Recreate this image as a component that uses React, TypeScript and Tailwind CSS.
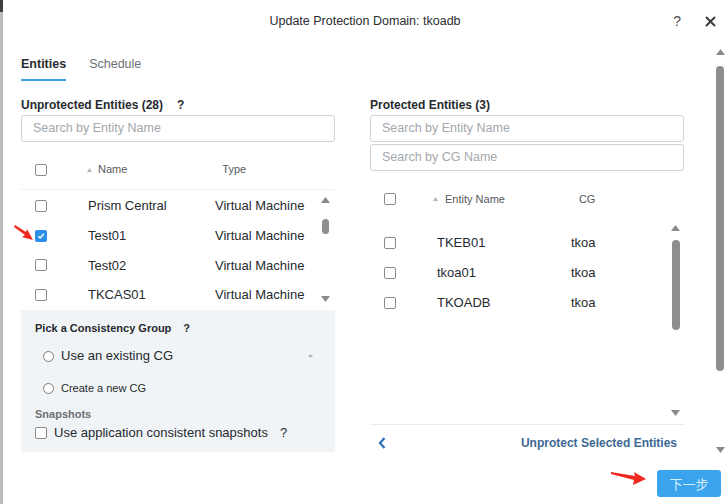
import React from 'react';

const Box: React.FC<{ checked?: boolean }> = ({ checked }) =>
    checked ? (
        <span className="flex h-[12px] w-[12px] items-center justify-center rounded-[2px] bg-[#2b8fe8]">
            <svg width="8" height="8" viewBox="0 0 8 8">
                <path d="M1.3 4.2 L3.2 6 L6.8 1.8" fill="none" stroke="#fff" strokeWidth="1.4" />
            </svg>
        </span>
    ) : (
        <span className="block h-[12px] w-[12px] rounded-[2px] border border-[#8b8b8b] bg-white" />
    );

const Radio: React.FC = () => <span className="block h-[11px] w-[11px] rounded-full border border-[#7d7d7d] bg-white" />;

const Up: React.FC = () => (
    <svg width="9" height="6" viewBox="0 0 9 6">
        <path d="M0 6 L4.5 0 L9 6 Z" fill="#8a8a8a" />
    </svg>
);

const Down: React.FC = () => (
    <svg width="9" height="6" viewBox="0 0 9 6">
        <path d="M0 0 L4.5 6 L9 0 Z" fill="#8a8a8a" />
    </svg>
);

const SortTick: React.FC = () => (
    <svg width="5" height="4" viewBox="0 0 5 4">
        <path d="M0 4 L2.5 0 L5 4 Z" fill="#b5b5b5" />
    </svg>
);

const SearchBox: React.FC<{ placeholder: string }> = ({ placeholder }) => (
    <div className="flex h-[27px] items-center rounded-[3px] border border-[#cfd3d7] bg-white px-[11px] text-[12.5px] text-[#a3a8ad]">
        {placeholder}
    </div>
);

const unprotected = ['Prism Central', 'Test01', 'Test02', 'TKCAS01'];
const protectedRows = ['TKEB01', 'tkoa01', 'TKOADB'];

export default function App() {
    return (
        <div className="relative flex h-[504px] w-[727px] overflow-hidden bg-white font-['Liberation_Sans',Arial,sans-serif] text-[#262a2e]">
            {/* edge of the page behind the dialog */}
            <div className="flex w-[3px] flex-col bg-[#b9bcbf]">
                <div className="h-[12px] bg-[#3d3f42]" />
            </div>

            <div className="flex flex-1 flex-col">
                {/* Header */}
                <div className="grid h-[42px] grid-cols-[1fr_auto_1fr] items-center">
                    <div />
                    <div className="text-[12.5px] text-[#2a2d30]">Update Protection Domain: tkoadb</div>
                    <div className="flex items-center justify-end gap-[24px] pr-[11px]">
                        <span className="text-[14px] text-[#4a4d50]">?</span>
                        <svg width="11" height="11" viewBox="0 0 11 11">
                            <path d="M1 1 L10 10 M10 1 L1 10" stroke="#3a3d40" strokeWidth="2" />
                        </svg>
                    </div>
                </div>

                {/* Body */}
                <div className="flex h-[418px]">
                    <div className="flex flex-1 flex-col pl-[18px]">
                        {/* Tabs */}
                        <div className="flex gap-[23px] pt-[14px] text-[12.5px]">
                            <div className="border-b-2 border-[#3a9fe4] pb-[7px] font-semibold leading-[16px] text-[#2a2d30]">
                                Entities
                            </div>
                            <div className="pb-[7px] leading-[16px] text-[#6b6f73]">Schedule</div>
                        </div>

                        <div className="mt-[14px] flex gap-[35px]">
                            {/* Left column */}
                            <div className="flex w-[314px] flex-col">
                                <div className="flex h-[20px] items-center gap-[14px] text-[12px] font-bold">
                                    <span>Unprotected Entities (28)</span>
                                    <span>?</span>
                                </div>
                                <div>
                                    <SearchBox placeholder="Search by Entity Name" />
                                </div>
                                <div className="mt-[8px] flex h-[40px] items-center border-b border-[#eef0f2] pl-[14px] text-[11px] text-[#55595d]">
                                    <Box />
                                    <span className="ml-[40px] flex items-center gap-[6px]">
                                        <SortTick />
                                        Name
                                    </span>
                                    <span className="ml-[95px]">Type</span>
                                </div>
                                <div className="flex h-[120px]">
                                    <div className="flex flex-1 flex-col pt-[1px]">
                                        {unprotected.map((name, i) => (
                                            <div key={name} className="flex h-[30px] items-center pl-[14px] text-[13px]">
                                                <Box checked={i === 1} />
                                                <span className="ml-[41px] w-[127px]">{name}</span>
                                                <span>Virtual Machine</span>
                                            </div>
                                        ))}
                                    </div>
                                    <div className="mr-[5px] flex w-[9px] flex-col items-center pt-[7px] pb-[8px]">
                                        <Up />
                                        <div className="mt-[16px] h-[15px] w-[7px] rounded-full bg-[#8e8e8e]" />
                                        <div className="flex-1" />
                                        <Down />
                                    </div>
                                </div>
                                <div className="flex h-[142px] flex-col bg-[#f1f4f6] pl-[14px] pt-[11px]">
                                    <div className="flex h-[14px] items-center gap-[12px] text-[11px] font-bold">
                                        <span>Pick a Consistency Group</span>
                                        <span>?</span>
                                    </div>
                                    <div className="mt-[11px] flex h-[20px] items-center pl-[8px] pr-[22px] text-[13px]">
                                        <Radio />
                                        <span className="ml-[7px] flex-1">Use an existing CG</span>
                                        <svg width="5" height="3" viewBox="0 0 5 3">
                                            <path d="M0 0 L2.5 3 L5 0 Z" fill="#b0b0b0" />
                                        </svg>
                                    </div>
                                    <div className="mt-[12px] flex h-[20px] items-center pl-[8px] text-[11px]">
                                        <Radio />
                                        <span className="ml-[7px]">Create a new CG</span>
                                    </div>
                                    <div className="mt-[9px] h-[14px] text-[11px] font-semibold leading-[14px] text-[#6b7075]">
                                        Snapshots
                                    </div>
                                    <div className="mt-[2px] flex h-[20px] items-center text-[13px]">
                                        <Box />
                                        <span className="ml-[7px]">Use application consistent snapshots</span>
                                        <span className="ml-[12px]">?</span>
                                    </div>
                                </div>
                            </div>

                            {/* Right column */}
                            <div className="flex w-[314px] flex-col">
                                <div className="flex h-[20px] items-center text-[12px] font-bold">Protected Entities (3)</div>
                                <div className="flex flex-col gap-[2px]">
                                    <SearchBox placeholder="Search by Entity Name" />
                                    <SearchBox placeholder="Search by CG Name" />
                                </div>
                                <div className="mt-[8px] flex h-[40px] items-center pl-[14px] text-[11px] text-[#55595d]">
                                    <Box />
                                    <span className="ml-[37px] flex items-center gap-[7px]">
                                        <SortTick />
                                        Entity Name
                                    </span>
                                    <span className="ml-[74px]">CG</span>
                                </div>
                                <div className="mt-[2px] flex h-[204px] border-b border-[#e9ecee]">
                                    <div className="flex flex-1 flex-col pt-[7px]">
                                        {protectedRows.map((name) => (
                                            <div key={name} className="flex h-[30px] items-center pl-[14px] text-[13px]">
                                                <Box />
                                                <span className="ml-[41px] w-[134px]">{name}</span>
                                                <span>tkoa</span>
                                            </div>
                                        ))}
                                    </div>
                                    <div className="mr-[4px] flex w-[9px] flex-col items-center pt-[4px] pb-[8px]">
                                        <Up />
                                        <div className="mt-[9px] h-[90px] w-[8px] rounded-full bg-[#8e8e8e]" />
                                        <div className="flex-1" />
                                        <Down />
                                    </div>
                                </div>
                                <div className="flex h-[36px] items-center justify-between pl-[8px] pr-[7px]">
                                    <svg width="8" height="12" viewBox="0 0 8 12">
                                        <path d="M6.5 1 L2 6 L6.5 11" fill="none" stroke="#2f6db3" strokeWidth="2.2" />
                                    </svg>
                                    <span className="text-[12px] font-bold text-[#3d6894]">Unprotect Selected Entities</span>
                                </div>
                            </div>
                        </div>
                    </div>

                    {/* Outer scrollbar */}
                    <div className="mr-[3px] flex w-[8px] flex-col items-center pt-[7px] pb-[7px]">
                        <Up />
                        <div className="mt-[11px] h-[305px] w-[8px] rounded-full bg-[#8e8e8e]" />
                        <div className="flex-1" />
                        <Down />
                    </div>
                </div>

                {/* Footer */}
                <div className="flex flex-1 items-start justify-end pr-[6px] pt-[10px]">
                    <button className="h-[27px] w-[64px] rounded-[3px] bg-[#3aa5ee] text-[13px] text-[#d6ebfa] font-['Noto_Sans_CJK_SC',sans-serif]">
                        下一步
                    </button>
                </div>
            </div>

            {/* annotation arrows */}
            <svg className="absolute left-[14px] top-[223px]" width="20" height="18" viewBox="0 0 20 18">
                <path d="M1 2 L12 9 L13 6 L19 17 L8 14 L11 12 L0 4 Z" fill="#f0281e" />
            </svg>
            <svg className="absolute left-[611px] top-[470px]" width="36" height="16" viewBox="0 0 36 16">
                <path d="M0 2 L24 6 L23 2 L35 9 L22 15 L23 10 L0 4 Z" fill="#f0281e" />
            </svg>
        </div>
    );
}
